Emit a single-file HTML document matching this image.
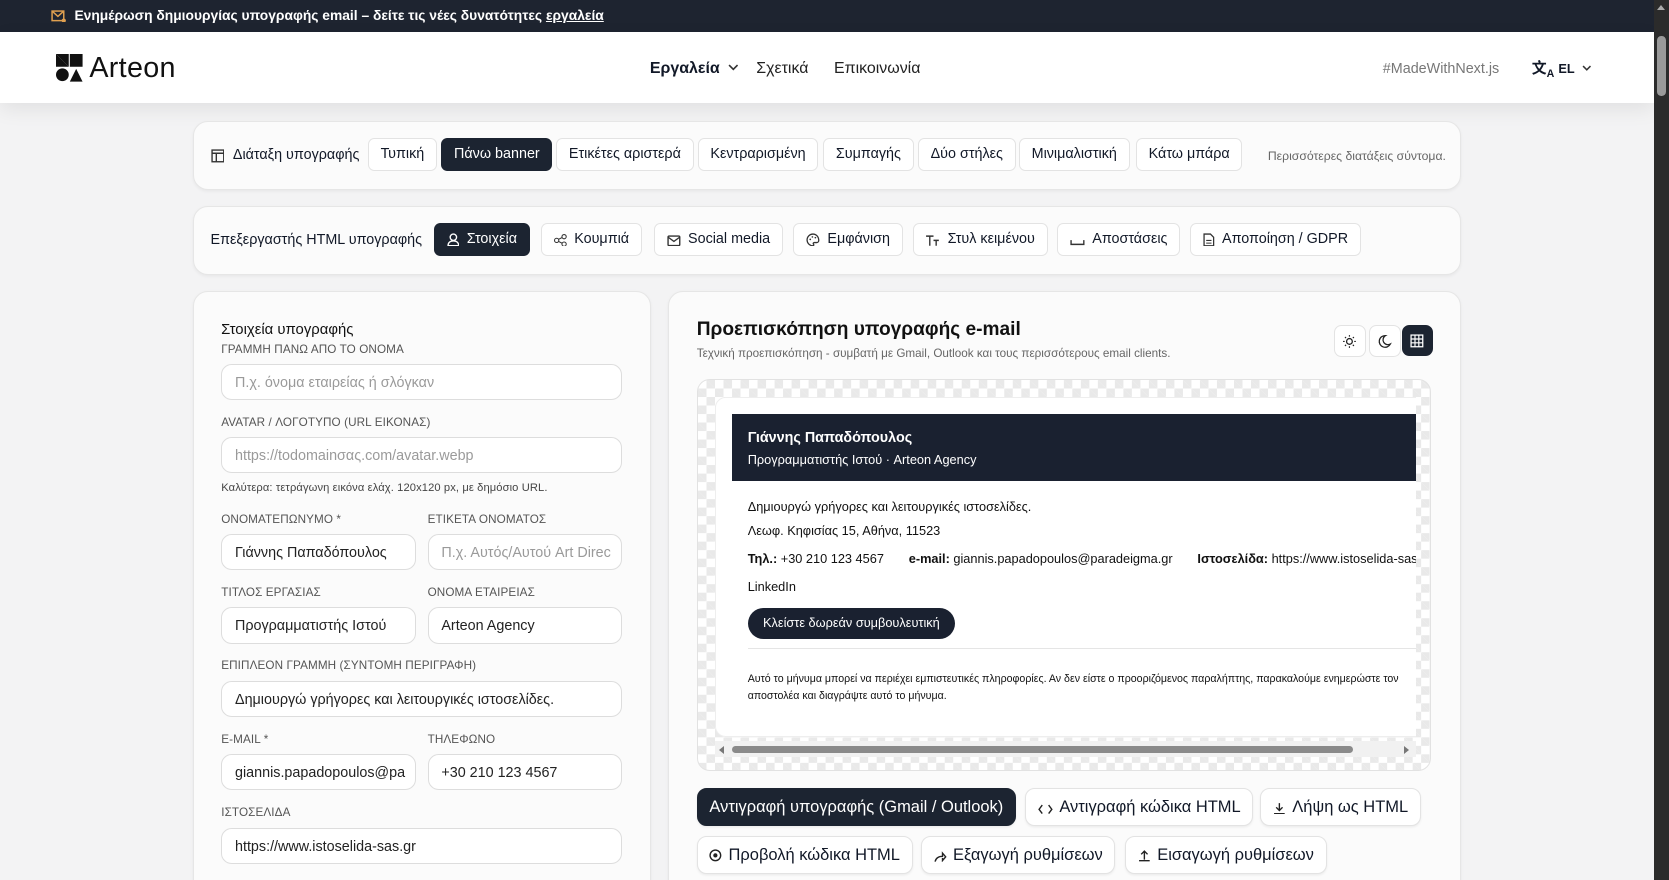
<!DOCTYPE html>
<html><head><meta charset="utf-8">
<style>
html,body{margin:0;padding:0;width:1669px;height:880px;overflow:hidden;background:#f3f3f3}
#root{zoom:1.0637;position:relative;width:1569px;height:827px;overflow:hidden;font-family:"Liberation Sans","Noto Sans CJK SC",sans-serif;color:#111827;background:#f3f3f4}
.a{position:absolute}
.top{left:0;top:0;width:1555px;height:30px;background:#1e2430;color:#fff;font-size:13px;font-weight:bold}
.hdr{left:0;top:30px;width:1555px;height:67px;background:#fff;box-shadow:0 6px 18px rgba(0,0,0,.08)}
.card{background:#fbfbfb;border:1px solid #e6e6e6;border-radius:14px;box-shadow:0 1px 3px rgba(0,0,0,.05)}
.btn{position:absolute;height:29px;border:1px solid #e3e3e3;border-radius:6px;background:#fff;font-size:13.5px;line-height:29px;padding:0 11px;white-space:nowrap;box-sizing:content-box}
.btn.d{background:#1c2431;color:#fff;border-color:#1c2431}
.btn svg{vertical-align:-3px;margin-right:7px}
.lbl{position:absolute;font-size:11px;color:#555;letter-spacing:.1px}
.inp{position:absolute;height:34px;border:1px solid #ddd;border-radius:10px;background:#fff;font-size:13.5px;line-height:34px;padding-left:12px;box-sizing:border-box;color:#222;white-space:nowrap;overflow:hidden}
.ph{color:#9a9a9a}
.b2{position:absolute;height:34px;border:1px solid #e3e3e3;border-radius:9px;background:#fff;font-size:15.5px;line-height:34px;padding:0 11px;white-space:nowrap;box-shadow:0 1px 2px rgba(0,0,0,.06)}
.b2 svg{vertical-align:-2px;margin-right:6px}
</style></head><body><div id="root">

<div class="a top">
<svg class="a" style="left:48px;top:9px" width="14" height="12" viewBox="0 0 14 12"><rect x="1" y="1" width="11" height="9" fill="none" stroke="#e0a050" stroke-width="1.4"/><path d="M1 1l5.5 5 5.5-5" fill="none" stroke="#e0a050" stroke-width="1.4"/><circle cx="12" cy="10" r="2" fill="#e0a050"/></svg>
<span class="a" style="left:70px;top:7px">Ενημέρωση δημιουργίας υπογραφής email – δείτε τις νέες δυνατότητες <u>εργαλεία</u></span>
</div>

<div class="a hdr">
<svg class="a" style="left:53px;top:21px" width="25" height="26" viewBox="0 0 25 26"><path d="M0 0h12v12z" fill="#111"/><path d="M0 0l12 12H0z" fill="#111"/><rect x="13" y="0" width="12" height="12" fill="#111"/><circle cx="6" cy="19.5" r="6" fill="#111"/><path d="M13 26l6-12 6 12z" fill="#111"/></svg>
<span class="a" style="left:84px;top:19px;font-size:27px;color:#111;letter-spacing:.3px">Arteon</span>
<span class="a" style="left:611px;top:26px;font-size:15px;font-weight:bold">Εργαλεία</span>
<svg class="a" style="left:684px;top:30px" width="10" height="7" viewBox="0 0 10 7"><path d="M1 1l4 4 4-4" fill="none" stroke="#333" stroke-width="1.5"/></svg>
<span class="a" style="left:711px;top:26px;font-size:15px;color:#222">Σχετικά</span>
<span class="a" style="left:784px;top:26px;font-size:15px;color:#222">Επικοινωνία</span>
<span class="a" style="left:1300px;top:27px;font-size:13.5px;color:#777">#MadeWithNext.js</span>
<span class="a" style="left:1440px;top:24px;font-size:14px;font-weight:bold">文<sub style="font-size:10px">A</sub></span>
<span class="a" style="left:1465px;top:27px;font-size:12px;font-weight:bold">EL</span>
<svg class="a" style="left:1487px;top:31px" width="9" height="6" viewBox="0 0 9 6"><path d="M1 1l3.5 3.5L8 1" fill="none" stroke="#333" stroke-width="1.4"/></svg>
</div>

<div class="a" style="left:1555px;top:0;width:14px;height:827px;background:#2b2b2b"><div class="a" style="left:3px;top:34px;width:8px;height:56px;border-radius:4px;background:#9a9a9a"></div><div class="a" style="left:3px;top:5px;border:4px solid transparent;border-bottom:5px solid #aaa;border-top:0"></div></div>

<div class="a card" style="left:181px;top:114px;width:1191px;height:63px">
<svg class="a" style="left:16px;top:25px" width="13" height="13" viewBox="0 0 13 13"><rect x="1" y="1" width="11" height="11" fill="none" stroke="#333" stroke-width="1.3"/><path d="M1 4h11M5 4v8" stroke="#333" stroke-width="1.3"/></svg>
<span class="a" style="left:37px;top:23px;font-size:13.5px">Διάταξη υπογραφής</span>
<div class="btn" style="left:164px;top:15px">Τυπική</div>
<div class="btn d" style="left:233px;top:15px">Πάνω banner</div>
<div class="btn" style="left:341px;top:15px">Ετικέτες αριστερά</div>
<div class="btn" style="left:474px;top:15px">Κεντραρισμένη</div>
<div class="btn" style="left:592px;top:15px">Συμπαγής</div>
<div class="btn" style="left:681px;top:15px">Δύο στήλες</div>
<div class="btn" style="left:776px;top:15px">Μινιμαλιστική</div>
<div class="btn" style="left:886px;top:15px">Κάτω μπάρα</div>
<span class="a" style="left:1010px;top:25px;font-size:11.5px;color:#666">Περισσότερες διατάξεις σύντομα.</span>
</div>

<div class="a card" style="left:181px;top:194px;width:1191px;height:63px">
<span class="a" style="left:16px;top:23px;font-size:13.5px">Επεξεργαστής HTML υπογραφής</span>
<div class="btn d" style="left:226px;top:15px"><svg width="12" height="13" viewBox="0 0 12 13"><circle cx="6" cy="4" r="3" fill="none" stroke="#fff" stroke-width="1.3"/><path d="M1 12c0-3 2-4.5 5-4.5s5 1.5 5 4.5z" fill="none" stroke="#fff" stroke-width="1.3"/></svg>Στοιχεία</div>
<div class="btn" style="left:327px;top:15px"><svg width="12" height="12" viewBox="0 0 12 12"><circle cx="2.5" cy="6" r="2" fill="none" stroke="#333"/><circle cx="9.5" cy="2.5" r="2" fill="none" stroke="#333"/><circle cx="9.5" cy="9.5" r="2" fill="none" stroke="#333"/><path d="M4.3 5l3.4-1.7M4.3 7l3.4 1.7" stroke="#333"/></svg>Κουμπιά</div>
<div class="btn" style="left:433px;top:15px"><svg width="13" height="11" viewBox="0 0 13 11"><rect x="1" y="1" width="11" height="9" rx="1" fill="none" stroke="#333" stroke-width="1.3"/><path d="M1 2l5.5 4L12 2" fill="none" stroke="#333" stroke-width="1.3"/></svg>Social media</div>
<div class="btn" style="left:564px;top:15px"><svg width="13" height="13" viewBox="0 0 13 13"><path d="M6.5 1a5.5 5.5 0 100 11c1 0 1-1 .5-1.6-.5-.6 0-1.4.8-1.4H10a2 2 0 002-2C12 3.5 9.5 1 6.5 1z" fill="none" stroke="#333" stroke-width="1.2"/><circle cx="4" cy="6" r=".8" fill="#333"/><circle cx="6" cy="3.7" r=".8" fill="#333"/><circle cx="8.8" cy="4.4" r=".8" fill="#333"/></svg>Εμφάνιση</div>
<div class="btn" style="left:676px;top:15px"><svg width="14" height="12" viewBox="0 0 14 12"><path d="M1 2h7M4.5 2v9M8 6h5M10.5 6v5" stroke="#333" stroke-width="1.3" fill="none"/></svg>Στυλ κειμένου</div>
<div class="btn" style="left:812px;top:15px"><svg width="14" height="8" viewBox="0 0 14 8"><path d="M1 2v4h12V2" fill="none" stroke="#333" stroke-width="1.3"/></svg>Αποστάσεις</div>
<div class="btn" style="left:937px;top:15px"><svg width="11" height="13" viewBox="0 0 11 13"><path d="M1 1h6l3 3v8H1z" fill="none" stroke="#333" stroke-width="1.2"/><path d="M3 7h5M3 9.5h5" stroke="#333"/></svg>Αποποίηση / GDPR</div>
</div>

<div class="a card" style="left:181px;top:274px;width:429px;height:580px">
<span class="a" style="left:26px;top:28px;font-size:14px;color:#111">Στοιχεία υπογραφής</span>
</div>
<div class="lbl" style="left:208px;top:322px">ΓΡΑΜΜΗ ΠΑΝΩ ΑΠΟ ΤΟ ΟΝΟΜΑ</div>
<div class="inp ph" style="left:208px;top:342px;width:377px">Π.χ. όνομα εταιρείας ή σλόγκαν</div>
<div class="lbl" style="left:208px;top:391px">AVATAR / ΛΟΓΟΤΥΠΟ (URL ΕΙΚΟΝΑΣ)</div>
<div class="inp ph" style="left:208px;top:411px;width:377px">https://todomainσας.com/avatar.webp</div>
<div class="lbl" style="left:208px;top:453px;font-size:10.5px;color:#444">Καλύτερα: τετράγωνη εικόνα ελάχ. 120x120 px, με δημόσιο URL.</div>
<div class="lbl" style="left:208px;top:482px">ΟΝΟΜΑΤΕΠΩΝΥΜΟ *</div>
<div class="lbl" style="left:402px;top:482px">ΕΤΙΚΕΤΑ ΟΝΟΜΑΤΟΣ</div>
<div class="inp" style="left:208px;top:502px;width:183px">Γιάννης Παπαδόπουλος</div>
<div class="inp ph" style="left:402px;top:502px;width:183px">Π.χ. Αυτός/Αυτού  Art Direc</div>
<div class="lbl" style="left:208px;top:551px">ΤΙΤΛΟΣ ΕΡΓΑΣΙΑΣ</div>
<div class="lbl" style="left:402px;top:551px">ΟΝΟΜΑ ΕΤΑΙΡΕΙΑΣ</div>
<div class="inp" style="left:208px;top:571px;width:183px">Προγραμματιστής Ιστού</div>
<div class="inp" style="left:402px;top:571px;width:183px">Arteon Agency</div>
<div class="lbl" style="left:208px;top:620px">ΕΠΙΠΛΕΟΝ ΓΡΑΜΜΗ (ΣΥΝΤΟΜΗ ΠΕΡΙΓΡΑΦΗ)</div>
<div class="inp" style="left:208px;top:640px;width:377px">Δημιουργώ γρήγορες και λειτουργικές ιστοσελίδες.</div>
<div class="lbl" style="left:208px;top:689px">E-MAIL *</div>
<div class="lbl" style="left:402px;top:689px">ΤΗΛΕΦΩΝΟ</div>
<div class="inp" style="left:208px;top:709px;width:183px">giannis.papadopoulos@pa</div>
<div class="inp" style="left:402px;top:709px;width:183px">+30 210 123 4567</div>
<div class="lbl" style="left:208px;top:758px">ΙΣΤΟΣΕΛΙΔΑ</div>
<div class="inp" style="left:208px;top:778px;width:377px">https://www.istoselida-sas.gr</div>

<div class="a card" style="left:628px;top:274px;width:744px;height:580px"></div>
<span class="a" style="left:655px;top:300px;font-size:18px;font-weight:bold;color:#111">Προεπισκόπηση υπογραφής e-mail</span>
<span class="a" style="left:655px;top:326px;font-size:11px;color:#666">Τεχνική προεπισκόπηση - συμβατή με Gmail, Outlook και τους περισσότερους email clients.</span>
<div class="a" style="left:1254px;top:306px;width:28px;height:28px;border:1px solid #e3e3e3;border-radius:7px;background:#fff"><svg class="a" style="left:7px;top:7px" width="14" height="14" viewBox="0 0 14 14"><circle cx="7" cy="7" r="2.7" fill="none" stroke="#222" stroke-width="1.2"/><path d="M7 1v1.5M7 11.5V13M1 7h1.5M11.5 7H13M2.8 2.8l1 1M10.2 10.2l1 1M2.8 11.2l1-1M10.2 3.8l1-1" stroke="#222" stroke-width="1.1"/></svg></div>
<div class="a" style="left:1287px;top:306px;width:28px;height:28px;border:1px solid #e3e3e3;border-radius:7px;background:#fff"><svg class="a" style="left:7px;top:7px" width="14" height="14" viewBox="0 0 14 14"><path d="M8 1.5a5.5 5.5 0 104.5 8A4.5 4.5 0 018 1.5z" fill="none" stroke="#222" stroke-width="1.2"/></svg></div>
<div class="a" style="left:1318px;top:306px;width:29px;height:29px;border-radius:7px;background:#1c2431"><svg class="a" style="left:8px;top:8px" width="13" height="13" viewBox="0 0 13 13"><rect x="1" y="1" width="11" height="11" fill="none" stroke="#fff" stroke-width="1.2"/><path d="M4.7 1v11M8.3 1v11M1 4.7h11M1 8.3h11" stroke="#fff" stroke-width="1.1"/></svg></div>

<div class="a" style="left:655px;top:356px;width:690px;height:369px;border-radius:12px;border:1px solid #e2e2e2;box-sizing:border-box;overflow:hidden;background-color:#fff;background-image:linear-gradient(45deg,#e9e9e9 25%,transparent 25%,transparent 75%,#e9e9e9 75%),linear-gradient(45deg,#e9e9e9 25%,transparent 25%,transparent 75%,#e9e9e9 75%);background-size:16px 16px;background-position:0 0,8px 8px">
<div class="a" style="left:16px;top:16px;width:659px;height:320px;overflow:hidden">
<div class="a" style="left:0;top:0;width:700px;height:318px;background:#fff;border-radius:10px;border:1px solid #eee"></div>
<div class="a" style="left:16px;top:16px;width:643px;height:63px;background:#1a2130"></div>
<span class="a" style="left:31px;top:31px;color:#fff;font-size:13.5px;font-weight:bold">Γιάννης Παπαδόπουλος</span>
<span class="a" style="left:31px;top:52px;color:#fff;font-size:12px">Προγραμματιστής Ιστού · Arteon Agency</span>
<span class="a" style="left:31px;top:96px;font-size:12px;color:#111">Δημιουργώ γρήγορες και λειτουργικές ιστοσελίδες.</span>
<span class="a" style="left:31px;top:119px;font-size:12px;color:#111">Λεωφ. Κηφισίας 15, Αθήνα, 11523</span>
<span class="a" style="left:31px;top:145px;font-size:12px;color:#111;white-space:nowrap"><b>Τηλ.:</b> +30 210 123 4567 &nbsp; &nbsp; &nbsp; <b>e-mail:</b> giannis.papadopoulos@paradeigma.gr &nbsp; &nbsp; &nbsp; <b>Ιστοσελίδα:</b> https://www.istoselida-sas.gr</span>
<span class="a" style="left:31px;top:171px;font-size:12px;color:#111">LinkedIn</span>
<div class="a" style="left:31px;top:199px;width:195px;height:29px;border-radius:15px;background:#1a2130;color:#fff;font-size:12px;line-height:29px;text-align:center">Κλείστε δωρεάν συμβουλευτική</div>
<div class="a" style="left:31px;top:236px;width:628px;height:1px;background:#e5e5e5"></div>
<span class="a" style="left:31px;top:258px;font-size:10px;color:#111;line-height:15.5px;white-space:nowrap">Αυτό το μήνυμα μπορεί να περιέχει εμπιστευτικές πληροφορίες. Αν δεν είστε ο προοριζόμενος παραλήπτης, παρακαλούμε ενημερώστε τον<br>αποστολέα και διαγράψτε αυτό το μήνυμα.</span>
</div>
<div class="a" style="left:16px;top:340px;width:659px;height:15px;background:#f1f1f1"></div>
<div class="a" style="left:32px;top:344px;width:584px;height:7px;border-radius:4px;background:#8a8a8a"></div>
<div class="a" style="left:20px;top:344px;border:4px solid transparent;border-right:5px solid #777;border-left:0"></div>
<div class="a" style="left:664px;top:344px;border:4px solid transparent;border-left:5px solid #777;border-right:0"></div>
</div>

<div class="b2" style="left:655px;top:741px;background:#1c2431;color:#fff;border-color:#1c2431">Αντιγραφή υπογραφής (Gmail / Outlook)</div>
<div class="b2" style="left:964px;top:741px"><svg width="14" height="10" viewBox="0 0 14 10"><path d="M4 1L1 5l3 4M10 1l3 4-3 4" fill="none" stroke="#222" stroke-width="1.3"/></svg>Αντιγραφή κώδικα HTML</div>
<div class="b2" style="left:1185px;top:741px"><svg width="12" height="12" viewBox="0 0 12 12"><path d="M6 1v7M3 5l3 3 3-3M1 11h10" fill="none" stroke="#222" stroke-width="1.3"/></svg>Λήψη ως HTML</div>
<div class="b2" style="left:655px;top:786px"><svg width="12" height="12" viewBox="0 0 12 12"><circle cx="6" cy="6" r="5" fill="none" stroke="#222" stroke-width="1.3"/><circle cx="6" cy="6" r="2" fill="#222"/></svg>Προβολή κώδικα HTML</div>
<div class="b2" style="left:866px;top:786px"><svg width="12" height="11" viewBox="0 0 12 11"><path d="M1 10c1-4 4-5 7-5V2l3 3.5L8 9V6.5" fill="none" stroke="#222" stroke-width="1.3"/></svg>Εξαγωγή ρυθμίσεων</div>
<div class="b2" style="left:1058px;top:786px"><svg width="12" height="12" viewBox="0 0 12 12"><path d="M6 10V2M3 5l3-3 3 3M1 11h10" fill="none" stroke="#222" stroke-width="1.3"/></svg>Εισαγωγή ρυθμίσεων</div>

</div></body></html>
